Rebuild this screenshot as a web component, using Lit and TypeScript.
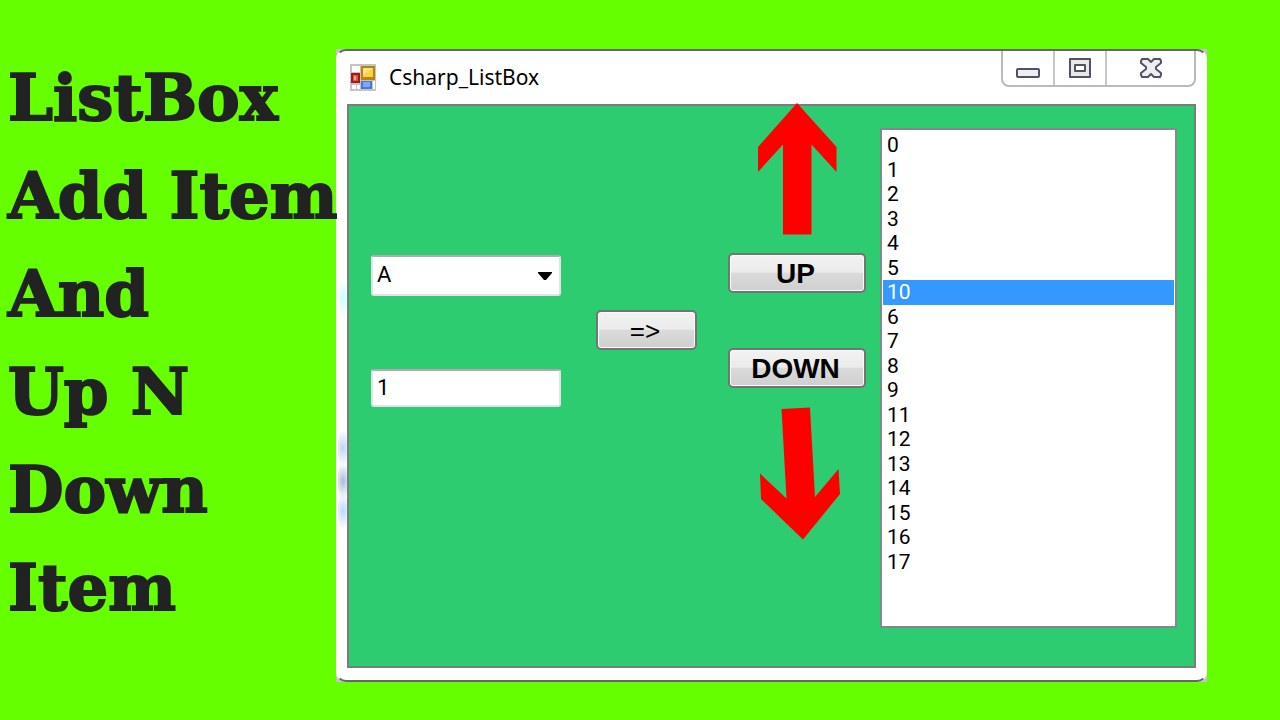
import { LitElement, html, css } from "lit";
import { customElement, state } from "lit/decorators.js";

@customElement("form-window")
class FormWindow extends LitElement {
  @state() private items = ["0", "1", "2", "3", "4", "5", "10", "6", "7", "8", "9", "11", "12", "13", "14", "15", "16", "17"];
  @state() private selected = "10";

  static styles = css`
    :host { display: block; background: #c4c4c8; font-family: "Liberation Sans", Arial, sans-serif; color: #000; }
    * { box-sizing: border-box; }
    .frame {
      border: 2px solid #fff; border-top-color: #66666a; border-bottom-color: #66666a; border-radius: 10px;
      padding: 0 9px 12px; display: flex; flex-direction: column;
      background:
        radial-gradient(6px 20px at 5px 247px, #c8ffff, #fff0),
        radial-gradient(8px 18px at 5px 397px, #bcd4f8, #fff0),
        radial-gradient(8px 18px at 5px 430px, #a8bce0, #fff0),
        radial-gradient(8px 18px at 5px 460px, #bcd8ff, #fff0),
        #fff;
    }
    .titlebar { display: flex; align-items: flex-start; height: 53px; }
    .app { display: flex; align-items: center; gap: 13px; flex: 1; height: 52px; padding-left: 3px; }
    .title { font: 400 21px/28px "Noto Sans", sans-serif; margin: 0; }
    .caption { display: flex; width: 195px; height: 36px; border: 2px solid #bababa; border-top: 0; border-radius: 0 0 8px 8px; }
    .caption button { border: 0; border-left: 2px solid #c6c6c6; background: none; padding: 0; flex: 52; display: grid; place-items: center; }
    .caption button:first-child { border-left: 0; }
    .caption .close { flex: 90; }
    .client {
      border: 2px solid #7c7c7c; background: #2ecc71; height: 564px; padding: 0 17px 0 22px;
      display: grid; grid-template-columns: 225px 132px 152px minmax(0, 1fr); align-items: start;
    }
    .fields { display: grid; gap: 73px; padding: 149px 35px 0 0; }
    .combo { display: grid; align-items: center; }
    .combo > * { grid-area: 1 / 1; }
    .combo svg { justify-self: end; margin-right: 9px; pointer-events: none; }
    .field {
      appearance: none; width: 100%; height: 38px; margin: 0; padding: 0 4px 2px; background: #fff; color: #000;
      border: 2px solid #e2e3ea; border-top-color: #abadb3; border-radius: 3px; font: 22px/24px Roboto, sans-serif; outline: none;
    }
    select.field { height: 41px; }
    .btn {
      border: 2px solid #747474; border-radius: 5px; height: 40px; width: 100%; padding: 2px 3px 0 0; color: #000;
      background: linear-gradient(#f2f2f2, #ebebeb 48%, #dadada 50%, #cfcfcf); box-shadow: inset 0 0 0 1px #fafafa;
      font: 700 28px/34px "Liberation Sans", Arial, sans-serif;
    }
    .add { font-size: 26px; font-weight: 400; }
    .transfer { padding: 204px 31px 0 0; }
    .moves { display: flex; flex-direction: column; align-items: center; padding-right: 14px; }
    .moves svg { overflow: visible; display: block; }
    .moves .btn { margin-top: 18px; }
    .moves .btn + .btn { margin: 55px 0 18px; }
    .list {
      appearance: none; width: auto; height: 500px; margin: 22px 0 0; padding: 3px 1px; border: 2px solid #828790; border-radius: 0;
      background: #fff; color: #000; font: 22px/24px Roboto, sans-serif; outline: none; overflow: hidden;
    }
    .list option { height: 24px; min-height: 24px; padding: 0 4px; line-height: 26px; font-size: 21px; }
    .list option:nth-child(odd) { height: 25px; }
    .list option:checked { background: linear-gradient(#3399ff, #3399ff); color: #fff; -webkit-text-fill-color: #fff; }
  `;

  private move(step: number) {
    const from = this.items.indexOf(this.selected);
    const to = from + step;
    if (from < 0 || to < 0 || to >= this.items.length) return;
    const next = [...this.items];
    [next[from], next[to]] = [next[to], next[from]];
    this.items = next;
  }

  private add() {
    const box = this.renderRoot.querySelector<HTMLInputElement>("#value");
    if (box && box.value && !this.items.includes(box.value)) this.items = [...this.items, box.value];
  }

  render() {
    return html`
      <div class="frame">
        <header class="titlebar">
          <div class="app">
            <svg width="26" height="27" viewBox="0 0 26 27" aria-hidden="true">
              <rect width="26" height="27" fill="#c4c4c4" />
              <path d="M2 2h8v6H2zM2 21h4v4H2zM7 21h3v4H7zM23 17h2v8h-2z" fill="#fff" />
              <rect x="11" y="2" width="14" height="14" fill="#b88508" />
              <rect x="13" y="4" width="10" height="9" fill="#ffd043" />
              <path d="M13 4h10L13 11z" fill="#ffe48a" />
              <rect x="1" y="9" width="9" height="10" fill="#a81818" />
              <rect x="3" y="11" width="5" height="6" fill="#d85848" />
              <rect x="4" y="12" width="2" height="4" fill="#f0a090" />
              <rect x="11" y="17" width="11" height="8" fill="#4878d8" />
              <rect x="13" y="18" width="7" height="5" fill="#80a8f8" />
            </svg>
            <h2 class="title">Csharp_ListBox</h2>
          </div>
          <div class="caption">
            <button aria-label="Minimize">
              <svg width="24" height="20" viewBox="0 0 24 20"><rect x="1" y="11" width="22" height="8" rx="1" fill="#eee" stroke="#50526a" stroke-width="2" /></svg>
            </button>
            <button aria-label="Maximize">
              <svg width="24" height="20" viewBox="0 0 24 20"><path d="M2 1h20v18H2zM7 7v6h10V7z" fill="#e8e8e8" fill-rule="evenodd" stroke="#50526a" stroke-width="2" stroke-linejoin="round" /></svg>
            </button>
            <button class="close" aria-label="Close">
              <svg width="22" height="20" viewBox="0 0 22 20"><path d="M2 1h6l3 3 3-3h6l1 2v2l-5 4v2l5 4v2l-1 2h-6l-3-3-3 3H2l-1-2v-2l5-4V9L1 5V3z" fill="#eee" stroke="#50526a" stroke-width="2" stroke-linejoin="round" /></svg>
            </button>
          </div>
        </header>
        <div class="client">
          <div class="fields">
            <div class="combo">
              <select class="field" aria-label="Letter"><option>A</option><option>B</option><option>C</option></select>
              <svg width="14" height="8" viewBox="0 0 14 8" aria-hidden="true"><path d="M0 0h14v1L8 8H6L0 1z" /></svg>
            </div>
            <input class="field" id="value" type="text" value="1" aria-label="Value" />
          </div>
          <div class="transfer"><button class="btn add" @click=${this.add}>=&gt;</button></div>
          <div class="moves">
            <svg width="80" height="129" viewBox="0 0 80 129" aria-hidden="true"><path d="M40-3 79.500 41V66L54.500 38.500V128.500H26V38.500L1 66V41z" fill="#f00" /></svg>
            <button class="btn" @click=${() => this.move(-1)}>UP</button>
            <button class="btn" @click=${() => this.move(1)}>DOWN</button>
            <svg width="80" height="132" viewBox="0 0 80 132" aria-hidden="true"><path d="M24.500 3 53 1.500 58 91 81.500 63 83 88 46 133.500 4 93 3 67.500 29.500 92.500z" fill="#f00" /></svg>
          </div>
          <select class="list" size="20" aria-label="Items" @change=${(e: Event) => { this.selected = (e.target as HTMLSelectElement).value; }}>
            ${this.items.map((i) => html`<option value=${i} ?selected=${i === this.selected}>${i}</option>`)}
          </select>
        </div>
      </div>
    `;
  }
}

@customElement("app-root")
class AppRoot extends LitElement {
  static styles = css`
    :host { display: block; min-height: 100vh; background: #66ff00; }
    .page { display: grid; grid-template-columns: 328px minmax(0, 1fr); padding: 49px 73px 38px 8px; align-items: start; }
    .heading {
      margin: 0; font: 700 64px/98px "DejaVu Serif", serif; color: #222; -webkit-text-stroke: 2px #222;
      white-space: nowrap; position: relative; z-index: 1;
    }
    .line { display: block; }
  `;

  render() {
    const lines = ["ListBox", "Add Item", "And", "Up N", "Down", "Item"];
    return html`
      <main class="page">
        <h1 class="heading">${lines.map((l) => html`<span class="line">${l}</span>`)}</h1>
        <form-window></form-window>
      </main>
    `;
  }
}
